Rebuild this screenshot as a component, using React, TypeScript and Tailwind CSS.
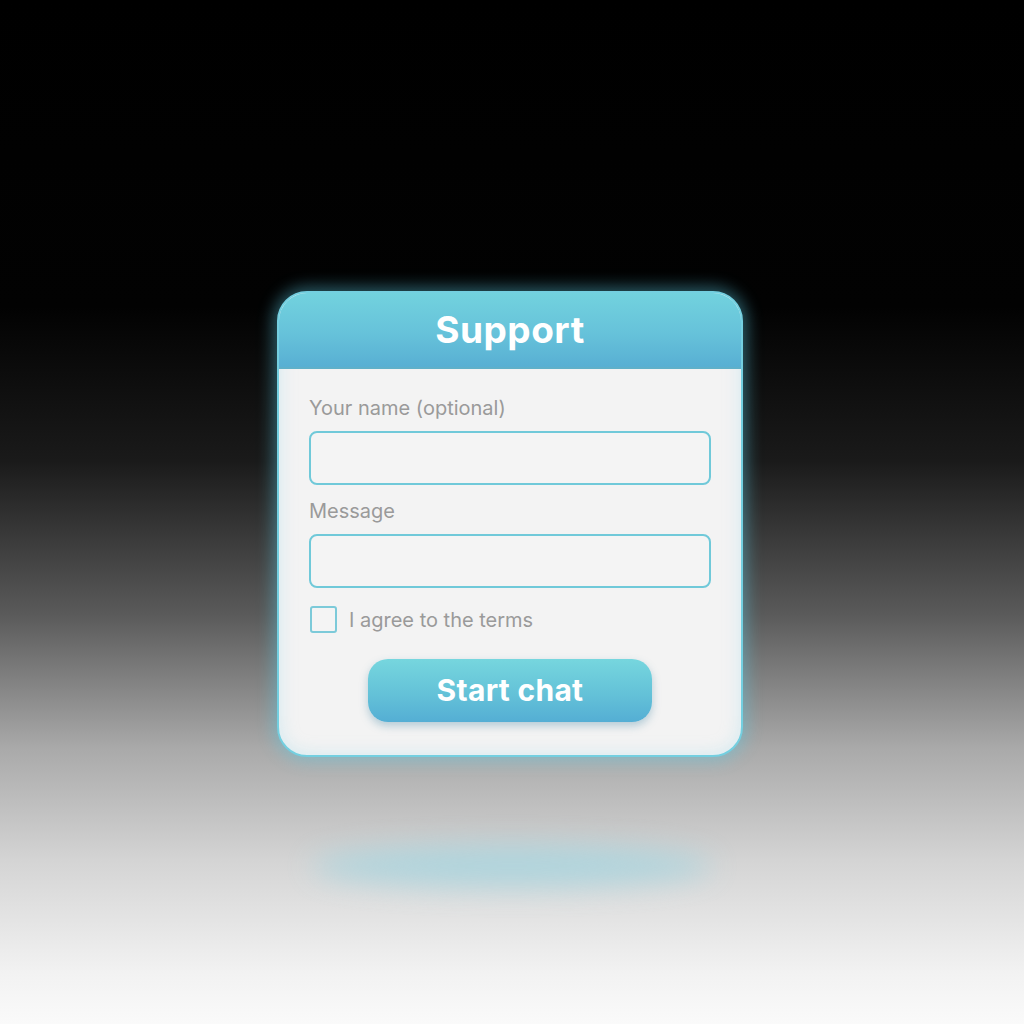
import React from 'react';

export default function App() {
  return (
    <div
      className="min-h-screen w-full flex flex-col items-center bg-[linear-gradient(180deg,#000_0%,#020202_30%,#1a1a1a_45%,#5a5a5a_60%,#a9a9a9_73%,#d4d4d4_84%,#f2f2f2_95%,#fafafa_100%)]"
      style={{ fontFamily: 'Inter, Lato, sans-serif' }}
    >
      {/* Card */}
      <div className="mt-[291px] mr-[4px] w-[466px] h-[466px] rounded-[30px] border-2 border-[#74cfe0] bg-[#f3f3f3] overflow-hidden flex flex-col shadow-[0_0_16px_4px_rgba(90,200,225,0.45),inset_0_0_18px_rgba(150,215,235,0.35)]">
        {/* Header */}
        <div className="h-[76px] shrink-0 flex items-center justify-center bg-[linear-gradient(180deg,#72d2de_0%,#66c2da_55%,#58afd3_100%)] border-b-2 border-[#5fb0c9]">
          <h1 className="text-[37px] font-bold text-white tracking-[0.5px] leading-none pb-[2px]">Support</h1>
        </div>

        {/* Body */}
        <div className="flex flex-col px-[30px] pt-[27px]">
          <label className="text-[20px] leading-6 text-[#9a9a9a]">Your name (optional)</label>
          <div className="mt-[11px] h-[54px] rounded-[8px] border-2 border-[#70c9d9] bg-[#f4f4f4]" />

          <label className="mt-[14px] text-[20px] leading-6 text-[#9a9a9a]">Message</label>
          <div className="mt-[11px] h-[54px] rounded-[8px] border-2 border-[#70c9d9] bg-[#f4f4f4]" />

          <div className="mt-[18px] flex items-center gap-[12px] pl-[1px]">
            <div className="w-[27px] h-[27px] rounded-[3px] border-2 border-[#7ccad9] bg-[#f4f4f4]" />
            <span className="text-[20px] leading-6 text-[#9a9a9a]">I agree to the terms</span>
          </div>

          <div className="mt-[26px] flex justify-center">
            <button className="w-[284px] h-[63px] rounded-[20px] bg-[linear-gradient(180deg,#76d6de_0%,#64c2d8_55%,#54aed4_100%)] text-white text-[30px] font-bold tracking-[0.3px] shadow-[0_4px_8px_rgba(60,130,160,0.35)]">
              Start chat
            </button>
          </div>
        </div>
      </div>

      {/* Floor glow */}
      <div className="mt-[88px] w-[400px] h-[42px] rounded-[50%] bg-[#a3d4df] opacity-75 blur-[14px]" />
    </div>
  );
}
